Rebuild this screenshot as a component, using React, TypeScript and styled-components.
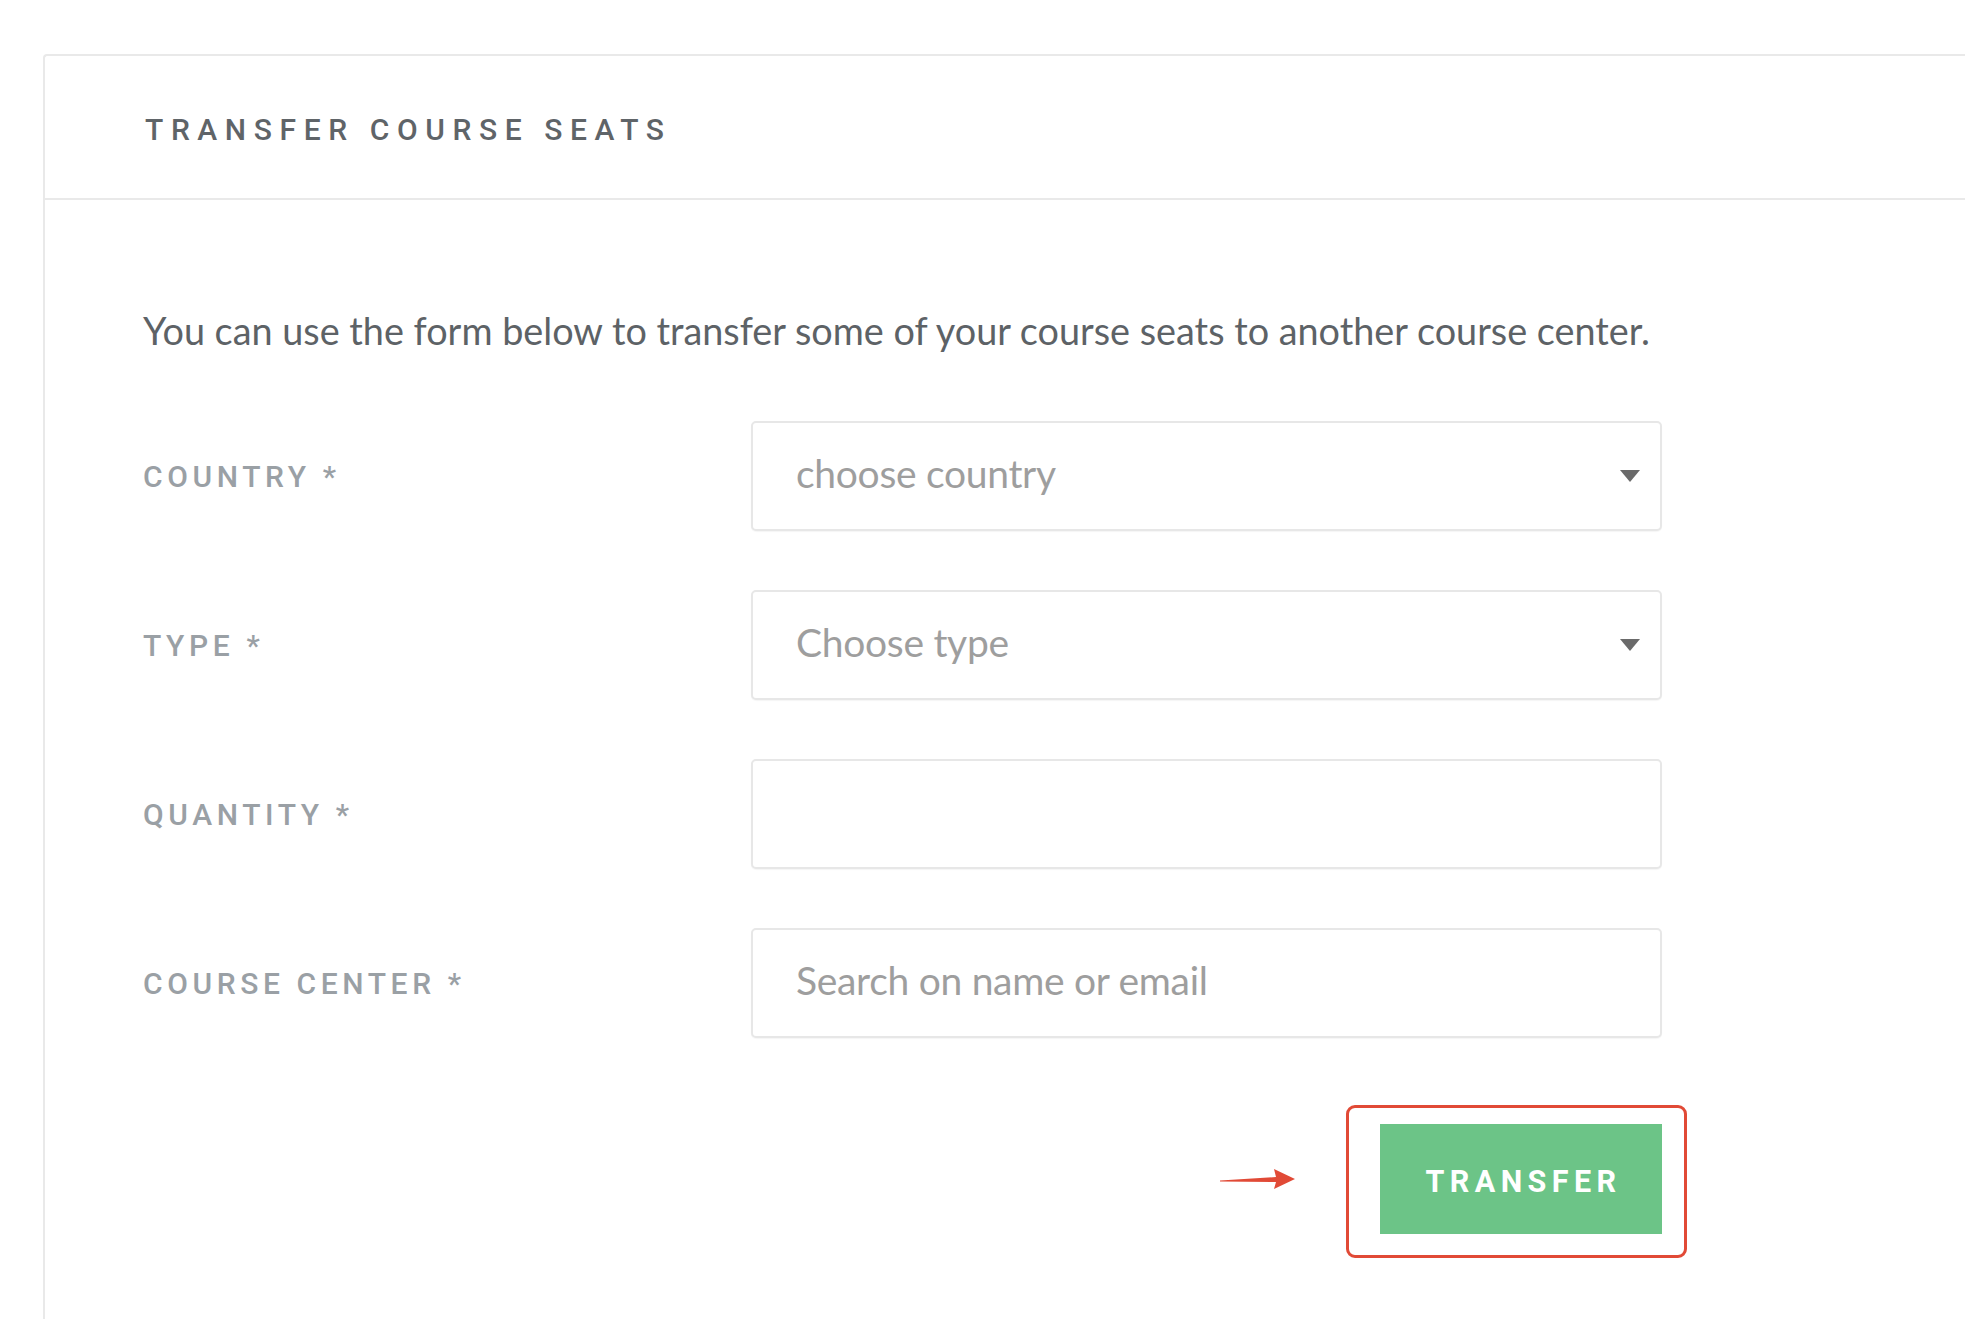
import React from "react";
import styled, { createGlobalStyle } from "styled-components";

const GlobalStyle = createGlobalStyle`
  html, body {
    margin: 0;
    padding: 0;
    background: #ffffff;
  }
  body {
    font-family: "Lato", "Open Sans", sans-serif;
    overflow: hidden;
  }
  * { box-sizing: border-box; }
`;

const Page = styled.div`
  height: 100vh;
  overflow: hidden;
  padding: 54px 0 0 43px;
`;

const Card = styled.section`
  margin-right: -20px;
  min-height: 1400px;
  border-top: 2px solid #e9e9e9;
  border-left: 2px solid #e9e9e9;
  border-top-left-radius: 4px;
  background: #fff;
`;

const CardHeader = styled.header`
  height: 144px;
  display: flex;
  align-items: center;
  padding: 4px 0 0 100px;
  border-bottom: 2px solid #e9e9e9;
`;

const Title = styled.h1`
  margin: 0;
  font-family: "Roboto", "Liberation Sans", sans-serif;
  font-weight: 500;
  font-size: 30px;
  letter-spacing: 7.6px;
  color: #5f6468;
  text-transform: uppercase;
`;

const CardBody = styled.div`
  padding: 108px 0 0 98px;
  width: fit-content;
`;

const Intro = styled.p`
  margin: 0 0 68px;
  font-family: "Lato", sans-serif;
  font-size: 37.8px;
  line-height: 45px;
  color: #5d6266;
`;

const Form = styled.form`
  display: flex;
  flex-direction: column;
  gap: 59px;
`;

const Row = styled.div`
  display: grid;
  grid-template-columns: 608px 911px;
  align-items: center;
`;

const Label = styled.label`
  font-family: "Roboto", "Liberation Sans", sans-serif;
  font-weight: 500;
  font-size: 30px;
  letter-spacing: 4.6px;
  color: #9aa0a5;
  text-transform: uppercase;
`;

const Field = styled.div`
  height: 110px;
  display: flex;
  align-items: center;
  justify-content: space-between;
  padding: 0 20px 6px 43px;
  border: 2px solid #e7e7e7;
  border-radius: 5px;
  background: #fff;
  box-shadow: 0 1px 1px rgba(0, 0, 0, 0.04);
`;

const Placeholder = styled.span`
  font-family: "Lato", sans-serif;
  font-size: 39px;
  letter-spacing: -0.3px;
  color: #9e9e9e;
`;

const Caret = styled.span`
  width: 0;
  height: 0;
  margin-top: 6px;
  border-left: 10px solid transparent;
  border-right: 10px solid transparent;
  border-top: 12px solid #6a6a6a;
`;

const Actions = styled.div`
  display: flex;
  justify-content: flex-end;
  margin-top: 27px;
`;

const Highlight = styled.div`
  position: relative;
`;

const HighlightFrame = styled.div`
  position: absolute;
  top: -19px;
  right: -25px;
  bottom: -24px;
  left: -34px;
  border: 3px solid #e14a36;
  border-radius: 9px;
  pointer-events: none;
`;

const Pointer = styled.svg`
  position: absolute;
  left: -160px;
  top: 43px;
`;

const Button = styled.button`
  width: 282px;
  height: 110px;
  border: 0;
  border-radius: 0;
  background: #6cc487;
  color: #ffffff;
  font-family: "Roboto", "Liberation Sans", sans-serif;
  font-weight: 700;
  font-size: 30.5px;
  letter-spacing: 5.4px;
  padding: 4px 0 0 5px;
  text-transform: uppercase;
  cursor: pointer;
`;

type FieldDef = { label: string; placeholder?: string; select?: boolean };

const fields: FieldDef[] = [
  { label: "Country *", placeholder: "choose country", select: true },
  { label: "Type *", placeholder: "Choose type", select: true },
  { label: "Quantity *" },
  { label: "Course center *", placeholder: "Search on name or email" },
];

export default function App() {
  return (
    <>
      <GlobalStyle />
      <Page>
        <Card>
          <CardHeader>
            <Title>Transfer course seats</Title>
          </CardHeader>
          <CardBody>
            <Intro>
              You can use the form below to transfer some of your course seats to another course center.
            </Intro>
            <Form onSubmit={(e) => e.preventDefault()}>
              {fields.map((f) => (
                <Row key={f.label}>
                  <Label>{f.label}</Label>
                  <Field>
                    <Placeholder>{f.placeholder ?? ""}</Placeholder>
                    {f.select && <Caret />}
                  </Field>
                </Row>
              ))}
              <Actions>
                <Highlight>
                  <Pointer width="76" height="24" viewBox="0 0 76 24">
                    <polygon
                      points="0,13.6 56,10 54,2 75,12 54,22 56,15 0,14.4"
                      fill="#e14a36"
                    />
                  </Pointer>
                  <HighlightFrame />
                  <Button type="submit">Transfer</Button>
                </Highlight>
              </Actions>
            </Form>
          </CardBody>
        </Card>
      </Page>
    </>
  );
}
